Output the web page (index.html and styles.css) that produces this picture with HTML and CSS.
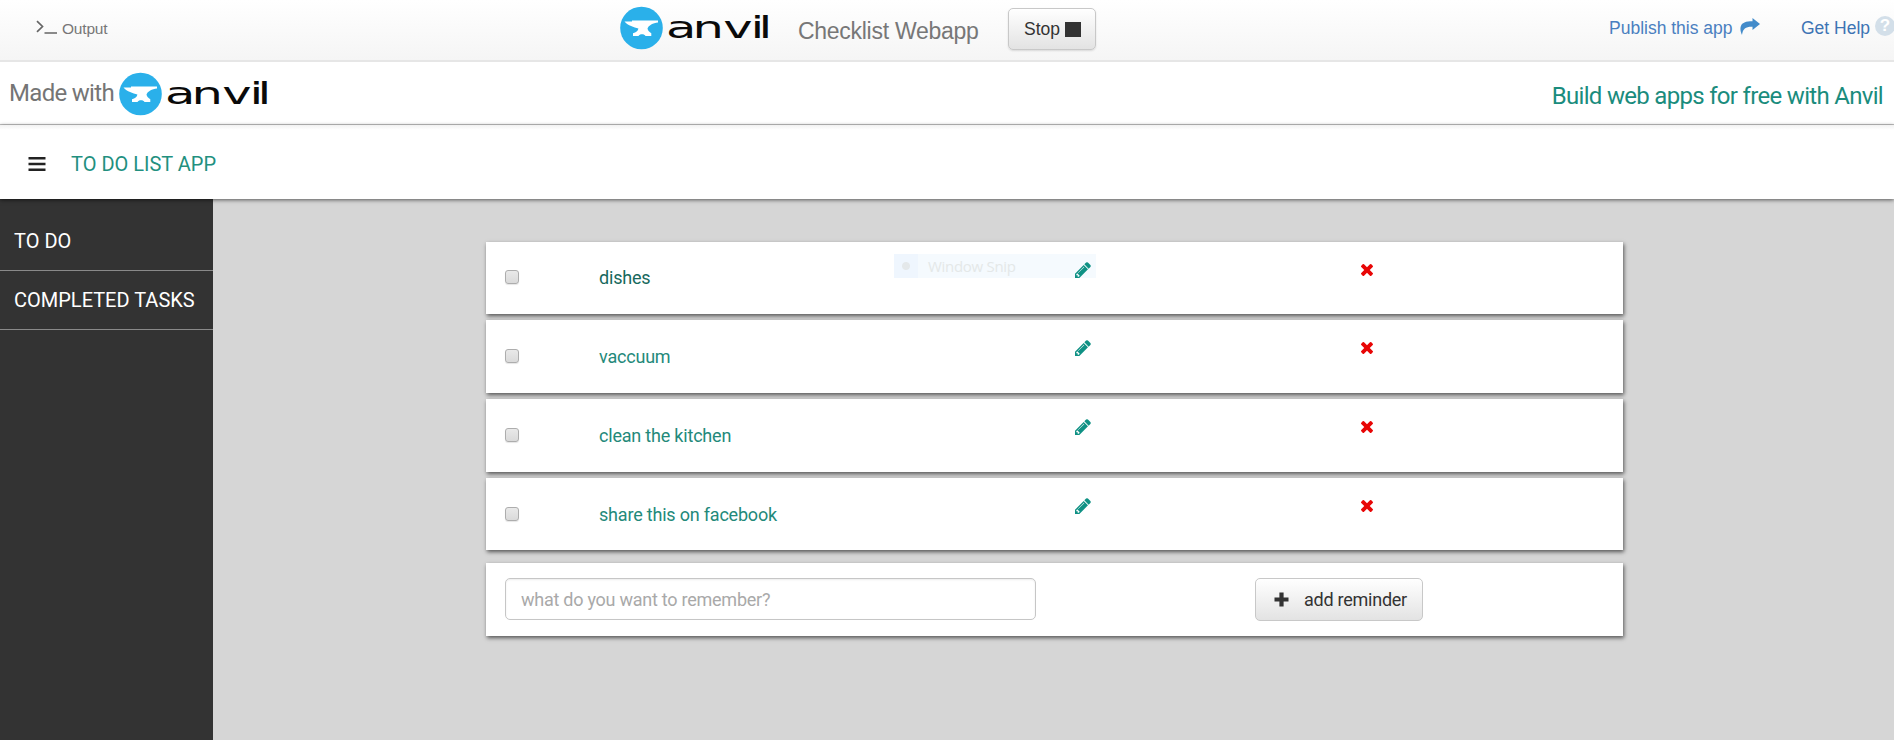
FILE: index.html
```html
<!DOCTYPE html>
<html lang="en">
<head>
<meta charset="utf-8">
<title>Checklist Webapp</title>
<link rel="stylesheet" href="styles.css">
</head>
<body>
<svg class="defs" width="0" height="0" aria-hidden="true">
  <symbol id="badge" viewBox="0 0 43 44">
    <circle cx="21.5" cy="22" r="21.3" fill="#2ab0ea"/>
    <path fill="#fff" d="M4.5 15.6 H12 V14.5 H38 V16.5 C33 17 28.5 19.5 27.5 22.5 C27.8 24.5 29.5 26 31.3 27.2 V30 H25.5 C24.5 27.7 19.5 27.7 18.5 30 H13 V27.2 C16 26.2 18 25 18.4 22.5 C14 21.3 8 19.8 4.5 15.6 Z"/>
  </symbol>
  <symbol id="pencil" viewBox="0 0 1536 1536">
    <path fill="currentColor" d="M363 1408l91-91-235-235-91 91v107h128v128zM886 480q0-22-22-22-10 0-17 7l-542 542q-7 7-7 17 0 22 22 22 10 0 17-7l542-542q7-7 7-17zM832 288l416 416-832 832H0v-416zM1515 384q0 53-37 90l-166 166-416-416 166-165q36-38 90-38 53 0 91 38l235 234q37 39 37 91z"/>
  </symbol>
  <symbol id="cross" viewBox="0 0 1188 1188">
    <path fill="currentColor" d="M1188 956q0 40-28 68l-136 136q-28 28-68 28t-68-28L594 866l-294 294q-28 28-68 28t-68-28L28 1024q-28-28-28-68t28-68l294-294L28 300Q0 272 0 232t28-68L164 28q28-28 68-28t68 28l294 294L888 28q28-28 68-28t68 28l136 136q28 28 28 68t-28 68L866 594l294 294q28 28 28 68z"/>
  </symbol>
</svg>

<header class="ide-bar">
  <div class="output">
    <svg width="22" height="14" viewBox="0 0 22 14"><path d="M1 1.200 6.500 6.500 1 11.800M8.500 13H21" fill="none" stroke="#666" stroke-width="1.700"/></svg>
    <span>Output</span>
  </div>
  <svg class="ide-logo" width="153" height="44" viewBox="0 0 153 44"><use href="#badge" width="43" height="44"/><text class="wordmark" transform="scale(1.6 1)" x="28.700 45.300 64.500 81.500 86.600" y="32">anvil</text></svg>
  <span class="app-name">Checklist Webapp</span>
  <button class="btn stop"><span>Stop</span><i class="stop-square"></i></button>
  <div class="links">
    <a class="publish"><span>Publish this app</span>
      <svg width="20" height="17" viewBox="0 0 20 17"><path fill="#428bca" d="M12.500 0 20 6 12.500 12V8.700C6 8.500 2.800 10.300 2 17 .8 14.500 0 11.500.6 9 1.700 4.400 6 3.300 12.500 3.300Z"/></svg></a>
    <a class="help"><span>Get Help</span><i class="help-dot">?</i></a>
  </div>
</header>

<div class="banner">
  <span class="made">Made with</span>
  <svg class="banner-logo" width="153" height="44" viewBox="0 0 153 44"><use href="#badge" width="43" height="44"/><text class="wordmark" transform="scale(1.6 1)" x="28.700 45.300 64.500 81.500 86.600" y="32">anvil</text></svg>
  <a class="build"><span>Build web apps for free with Anvil</span></a>
</div>

<div class="app-bar">
  <svg width="18" height="14" viewBox="0 0 18 14"><path d="M.5 1.200H17.500M.5 7H17.500M.5 12.800H17.500" stroke="#222" stroke-width="2.400"/></svg>
  <span class="app-title">TO DO LIST APP</span>
</div>

<div class="body">
  <nav class="side">
    <a><span>TO DO</span></a>
    <a><span>COMPLETED TASKS</span></a>
  </nav>
  <main class="content">
    <div class="task first">
      <i class="check"></i><span class="name">dishes</span>
      <svg class="edit" width="16" height="16"><use href="#pencil"/></svg>
      <svg class="remove" width="12" height="12"><use href="#cross"/></svg>
      <div class="snip"><i class="snip-icon"></i><span>Window Snip</span></div>
    </div>
    <div class="task">
      <i class="check"></i><span class="name">vaccuum</span>
      <svg class="edit" width="16" height="16"><use href="#pencil"/></svg>
      <svg class="remove" width="12" height="12"><use href="#cross"/></svg>
    </div>
    <div class="task">
      <i class="check"></i><span class="name">clean the kitchen</span>
      <svg class="edit" width="16" height="16"><use href="#pencil"/></svg>
      <svg class="remove" width="12" height="12"><use href="#cross"/></svg>
    </div>
    <div class="task last">
      <i class="check"></i><span class="name">share this on facebook</span>
      <svg class="edit" width="16" height="16"><use href="#pencil"/></svg>
      <svg class="remove" width="12" height="12"><use href="#cross"/></svg>
    </div>
    <div class="entry">
      <input type="text" placeholder="what do you want to remember?">
      <button class="btn add"><svg width="15" height="15" viewBox="0 0 15 15"><path d="M7.500 .5V14.500M.5 7.500H14.500" stroke="#333" stroke-width="4.200"/></svg><span>add reminder</span></button>
    </div>
  </main>
</div>
</body>
</html>
```
FILE: styles.css
```css
* { box-sizing: border-box; }
body {
  margin: 0;
  height: 740px;
  display: flex;
  flex-direction: column;
  overflow: hidden;
  font-family: Roboto, "Liberation Sans", sans-serif;
  font-size: 18px;
  color: #333;
  background: #d6d6d6;
}
svg { display: block; flex: none; }
span { white-space: nowrap; }
.defs { position: absolute; }
.wordmark { font: 31px "DejaVu Sans", sans-serif; fill: #0a0a0a; }

.ide-bar {
  height: 62px;
  flex: none;
  display: flex;
  align-items: flex-start;
  font-family: "Liberation Sans", Arial, sans-serif;
  background: linear-gradient(#fff, #f5f5f5);
  border-bottom: 2px solid #e6e6e6;
}
.output {
  width: 620px;
  padding: 20px 0 0 36px;
  display: flex;
  gap: 4px;
  font-size: 15.500px;
  letter-spacing: -.2px;
  line-height: 18px;
  color: #777;
}
.ide-logo { margin-top: 6px; }
.app-name { width: 210px; padding: 16px 0 0 25px; font-size: 23px; letter-spacing: -.28px; line-height: 30px; color: #777; }
.btn {
  display: flex;
  align-items: center;
  border: 1px solid #c8c8c8;
  border-radius: 5px;
  background: linear-gradient(#fff, #e3e3e3);
  color: #333;
  font-size: 18px;
}
.stop {
  width: 88px;
  height: 42px;
  margin: 8px 0 0 25px;
  padding: 0 0 0 15px;
  gap: 5px;
  font-family: "Liberation Sans", Arial, sans-serif;
  font-size: 17.500px;
  box-shadow: 0 1px 2px rgba(0,0,0,.12);
}
.stop-square { width: 16px; height: 15px; background: #333; }
.links { margin-left: auto; display: flex; color: #4a7fc0; font-size: 17.500px; line-height: 20px; padding-top: 18px; }
.publish { display: flex; width: 192px; gap: 7px; }
.help { display: flex; width: 93px; gap: 5px; color: #3d74b4; }
.help-dot {
  width: 20px; height: 20px; flex: none; margin-top: -2px;
  border-radius: 50%;
  background: #d3dfe9; color: #fff;
  font-style: normal; font-weight: 700; font-size: 17px; text-align: center;
}

.banner {
  height: 63px;
  flex: none;
  display: flex;
  align-items: flex-start;
  padding: 0 11px 0 9px;
  background: #fff;
  border-bottom: 1px solid #c4c4c4;
  font-size: 24px;
  line-height: 30px;
  letter-spacing: -.69px;
}
.made { width: 110px; padding-top: 16px; color: #757575; }
.banner-logo { margin-top: 10px; letter-spacing: 0; }
.build { margin-left: auto; padding-top: 19px; color: #1a8c7d; }

.app-bar {
  height: 74px;
  flex: none;
  display: flex;
  align-items: center;
  gap: 25px;
  padding: 0 0 0 28px;
  position: relative;
  background: linear-gradient(#f1f1f1, #fff 5px);
  box-shadow: 0 1px 4px rgba(0,0,0,.6);
}
.app-title { font-size: 20px; line-height: 24px; color: #22907f; margin-top: 4px; }
.app-bar svg { margin-top: 4px; }

.body { flex: 1; display: flex; }
.side { width: 213px; background: #333; padding-top: 13px; flex: none; }
.side a {
  display: flex;
  align-items: center;
  height: 59px;
  padding-left: 14px;
  border-bottom: 1px solid #8a8a8a;
  color: #fff;
  font-size: 20px;
}
.content { width: 1137px; margin: 43px 0 0 273px; display: flex; flex-direction: column; gap: 6px; }
.task, .entry { background: #fff; box-shadow: 1px 2px 4px rgba(0,0,0,.6); }
.task {
  position: relative;
  height: 73px;
  display: grid;
  grid-template-columns: 94px 476px 286px 1fr;
  padding-left: 19px;
}
.first, .last { height: 72px; }
.check {
  width: 14px; height: 14px; margin-top: 29px;
  border: 1px solid #adadad;
  border-radius: 3px;
  background: linear-gradient(#e9e9e9, #dadada);
  box-shadow: 0 1px 1px rgba(0,0,0,.1);
}
.name { padding-top: 25px; line-height: 24px; letter-spacing: -.2px; color: #23897a; }
.first .check { margin-top: 28px; }
.first .name { padding-top: 24px; color: #17695d; }
.edit { margin-top: 20px; color: #0f9184; position: relative; z-index: 1; }
.remove { margin-top: 22px; color: #e80606; }
.snip {
  position: absolute; left: 408px; top: 12px;
  width: 202px; height: 24px;
  display: flex; align-items: center;
  background: #f5fafe; color: #e4e8e8;
  font: 15px "Open Sans", sans-serif;
  letter-spacing: -.3px;
}
.snip-icon { width: 24px; height: 24px; margin-right: 10px; background: radial-gradient(circle at 12px 12px, #e4e8ea 3.500px, #eff6fe 4.500px); }

.entry { height: 73px; margin-top: 7px; padding: 15px 0 0 19px; display: flex; align-items: flex-start; }
.entry input {
  width: 531px; height: 42px;
  padding: 0 15px;
  border: 1px solid #c6c6c6; border-radius: 5px;
  box-shadow: inset 0 1px 2px rgba(0,0,0,.08);
  font: 18px Roboto, sans-serif;
  letter-spacing: -.25px;
}
.entry input::placeholder { color: #a9a9a9; opacity: 1; }
.add { width: 168px; height: 43px; margin-left: 219px; padding: 0 0 0 18px; gap: 15px; font-family: Roboto, sans-serif; letter-spacing: -.25px; }
```
